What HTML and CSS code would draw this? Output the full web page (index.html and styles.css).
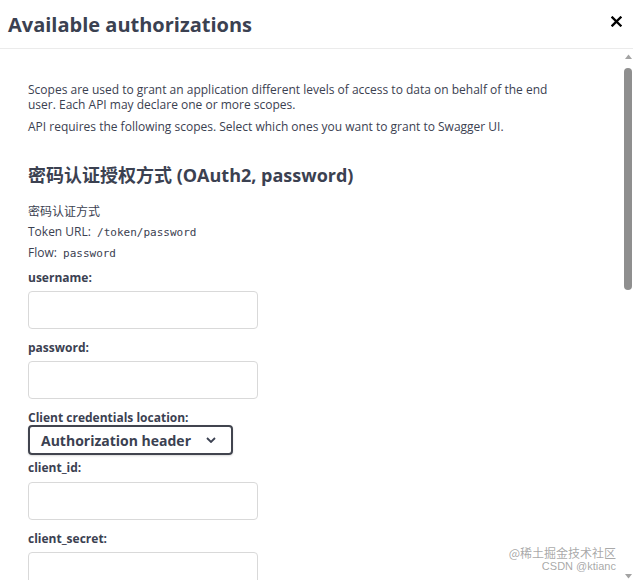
FILE: index.html
```html
<!DOCTYPE html>
<html lang="en">
<head>
    <meta charset="UTF-8">
    <meta name="viewport" content="width=device-width, initial-scale=1.0">
    <title>Available authorizations</title>
    <link rel="stylesheet" href="styles.css">
</head>
<body>

    <div class="modal">
        <div class="modal-header">
            <h3>Available authorizations</h3>
            <button class="close" type="button" aria-label="Close">
                <svg width="11" height="11" viewBox="0 0 11 11">
                    <path d="M1.5 1.5 L9.5 9.5 M9.5 1.5 L1.5 9.5" stroke="#000" stroke-width="2.3" stroke-linecap="square"/>
                </svg>
            </button>
        </div>

        <div class="modal-body">
            <p class="scopes-info">Scopes are used to grant an application different levels of access to data on behalf of the end user. Each API may declare one or more scopes.</p>
            <p class="scopes-info">API requires the following scopes. Select which ones you want to grant to Swagger UI.</p>

            <form class="auth-form">
                <h4>密码认证授权方式 (OAuth2, password)</h4>

                <p class="meta">密码认证方式</p>
                <p class="meta">Token URL: <code>/token/password</code></p>
                <p class="meta">Flow: <code>password</code></p>

                <label for="username">username:</label>
                <input type="text" id="username">

                <label for="password">password:</label>
                <input type="password" id="password">

                <label class="select-label" for="location">Client credentials location:</label>
                <div class="select" id="location">
                    <span>Authorization header</span>
                    <svg width="10" height="6" viewBox="0 0 10 6">
                        <path d="M1 1 L5 5 L9 1" fill="none" stroke="#3b4151" stroke-width="1.8"/>
                    </svg>
                </div>

                <label class="after-select" for="client_id">client_id:</label>
                <input type="text" id="client_id">

                <label for="client_secret">client_secret:</label>
                <input type="password" id="client_secret">
            </form>
        </div>

        <!-- scrollbar of the modal body -->
        <div class="scrollbar">
            <svg class="arrow" width="7" height="5" viewBox="0 0 7 5"><path d="M0 5 L3.5 0.5 L7 5 Z" fill="#a3a3a3"/></svg>
            <div class="thumb"></div>
            <svg class="arrow down" width="7" height="5" viewBox="0 0 7 5"><path d="M0 0 L3.5 4.5 L7 0 Z" fill="#a3a3a3"/></svg>
        </div>

        <div class="watermark">
            <span class="wm-top">@稀土掘金技术社区</span>
            <span class="wm-bottom">CSDN @ktianc</span>
        </div>
    </div>

</body>
</html>
```

FILE: styles.css
```css
/* Basic Reset */
* {
    margin: 0;
    padding: 0;
    box-sizing: border-box;
}

body {
    font-family: "Open Sans", "Noto Sans CJK SC", sans-serif;
    background-color: #fff;
    color: #3b4151;
    height: 580px;
    overflow: hidden;
}

/* Modal */
.modal {
    position: relative;
    height: 580px;
    display: flex;
    flex-direction: column;
}

.modal-header {
    height: 49px;
    flex: none;
    display: flex;
    justify-content: space-between;
    align-items: center;
    padding: 0 11px 0 8px;
    border-bottom: 1px solid #ebebeb;
}

.modal-header h3 {
    font-size: 20px;
    font-weight: 700;
    color: #3b4151;
}

.close {
    border: none;
    background: none;
    width: 11px;
    height: 11px;
    display: flex;
    margin-top: -6px;
}

.modal-body {
    flex: 1;
    overflow: hidden;
    padding: 33px 70px 0 28px;
}

.scopes-info {
    font-size: 12px;
    line-height: 15px;
    margin-bottom: 7px;
}

/* Auth form */
.auth-form {
    display: flex;
    flex-direction: column;
    align-items: flex-start;
}

h4 {
    font-size: 18px;
    font-weight: 700;
    line-height: 24px;
    margin: 22px 0 17px;
}

.meta {
    font-size: 12px;
    line-height: 16px;
    margin-bottom: 4px;
}

code {
    font-family: "DejaVu Sans Mono", monospace;
    font-size: 11px;
    margin-left: 3px;
}

label {
    font-size: 12px;
    font-weight: 700;
    line-height: 16px;
    margin-top: 4px;
    margin-bottom: 5px;
}

input {
    width: 230px;
    height: 38px;
    flex: none;
    padding: 8px 10px;
    border: 1px solid #d9d9d9;
    border-radius: 4px;
    font-size: 13px;
    margin-bottom: 7px;
    outline: none;
}

.select-label {
    margin-top: 4px;
    margin-bottom: -1px;
}

.select {
    width: 205px;
    height: 30px;
    display: flex;
    justify-content: space-between;
    align-items: center;
    padding: 0 15px 0 11px;
    border: 2px solid #41444e;
    border-radius: 4px;
    box-shadow: 0 1px 2px rgba(0, 0, 0, 0.15);
    font-size: 14px;
    font-weight: 700;
    margin-bottom: 5px;
}

.after-select {
    margin-top: 0;
    margin-bottom: 6px;
}

/* Scrollbar drawn over the right edge */
.scrollbar {
    position: absolute;
    top: 49px;
    right: 0;
    bottom: 0;
    width: 10px;
    display: flex;
    flex-direction: column;
    align-items: center;
    background: #fff;
}

.arrow {
    margin-top: 5px;
    flex: none;
}

.arrow.down {
    margin-top: auto;
    margin-bottom: 1px;
}

.thumb {
    width: 8px;
    height: 222px;
    margin-top: 9px;
    background: #8f8f8f;
    border-radius: 4px;
}

/* Watermark in the corner */
.watermark {
    position: absolute;
    right: 17px;
    bottom: 7px;
    display: flex;
    flex-direction: column;
    align-items: flex-end;
    color: rgba(130, 130, 130, 0.7);
    pointer-events: none;
}

.wm-top {
    font-family: "Noto Sans CJK SC", sans-serif;
    font-size: 12px;
    line-height: 15px;
}

.wm-bottom {
    font-family: "Liberation Sans", sans-serif;
    font-size: 11px;
    line-height: 13px;
}
```
